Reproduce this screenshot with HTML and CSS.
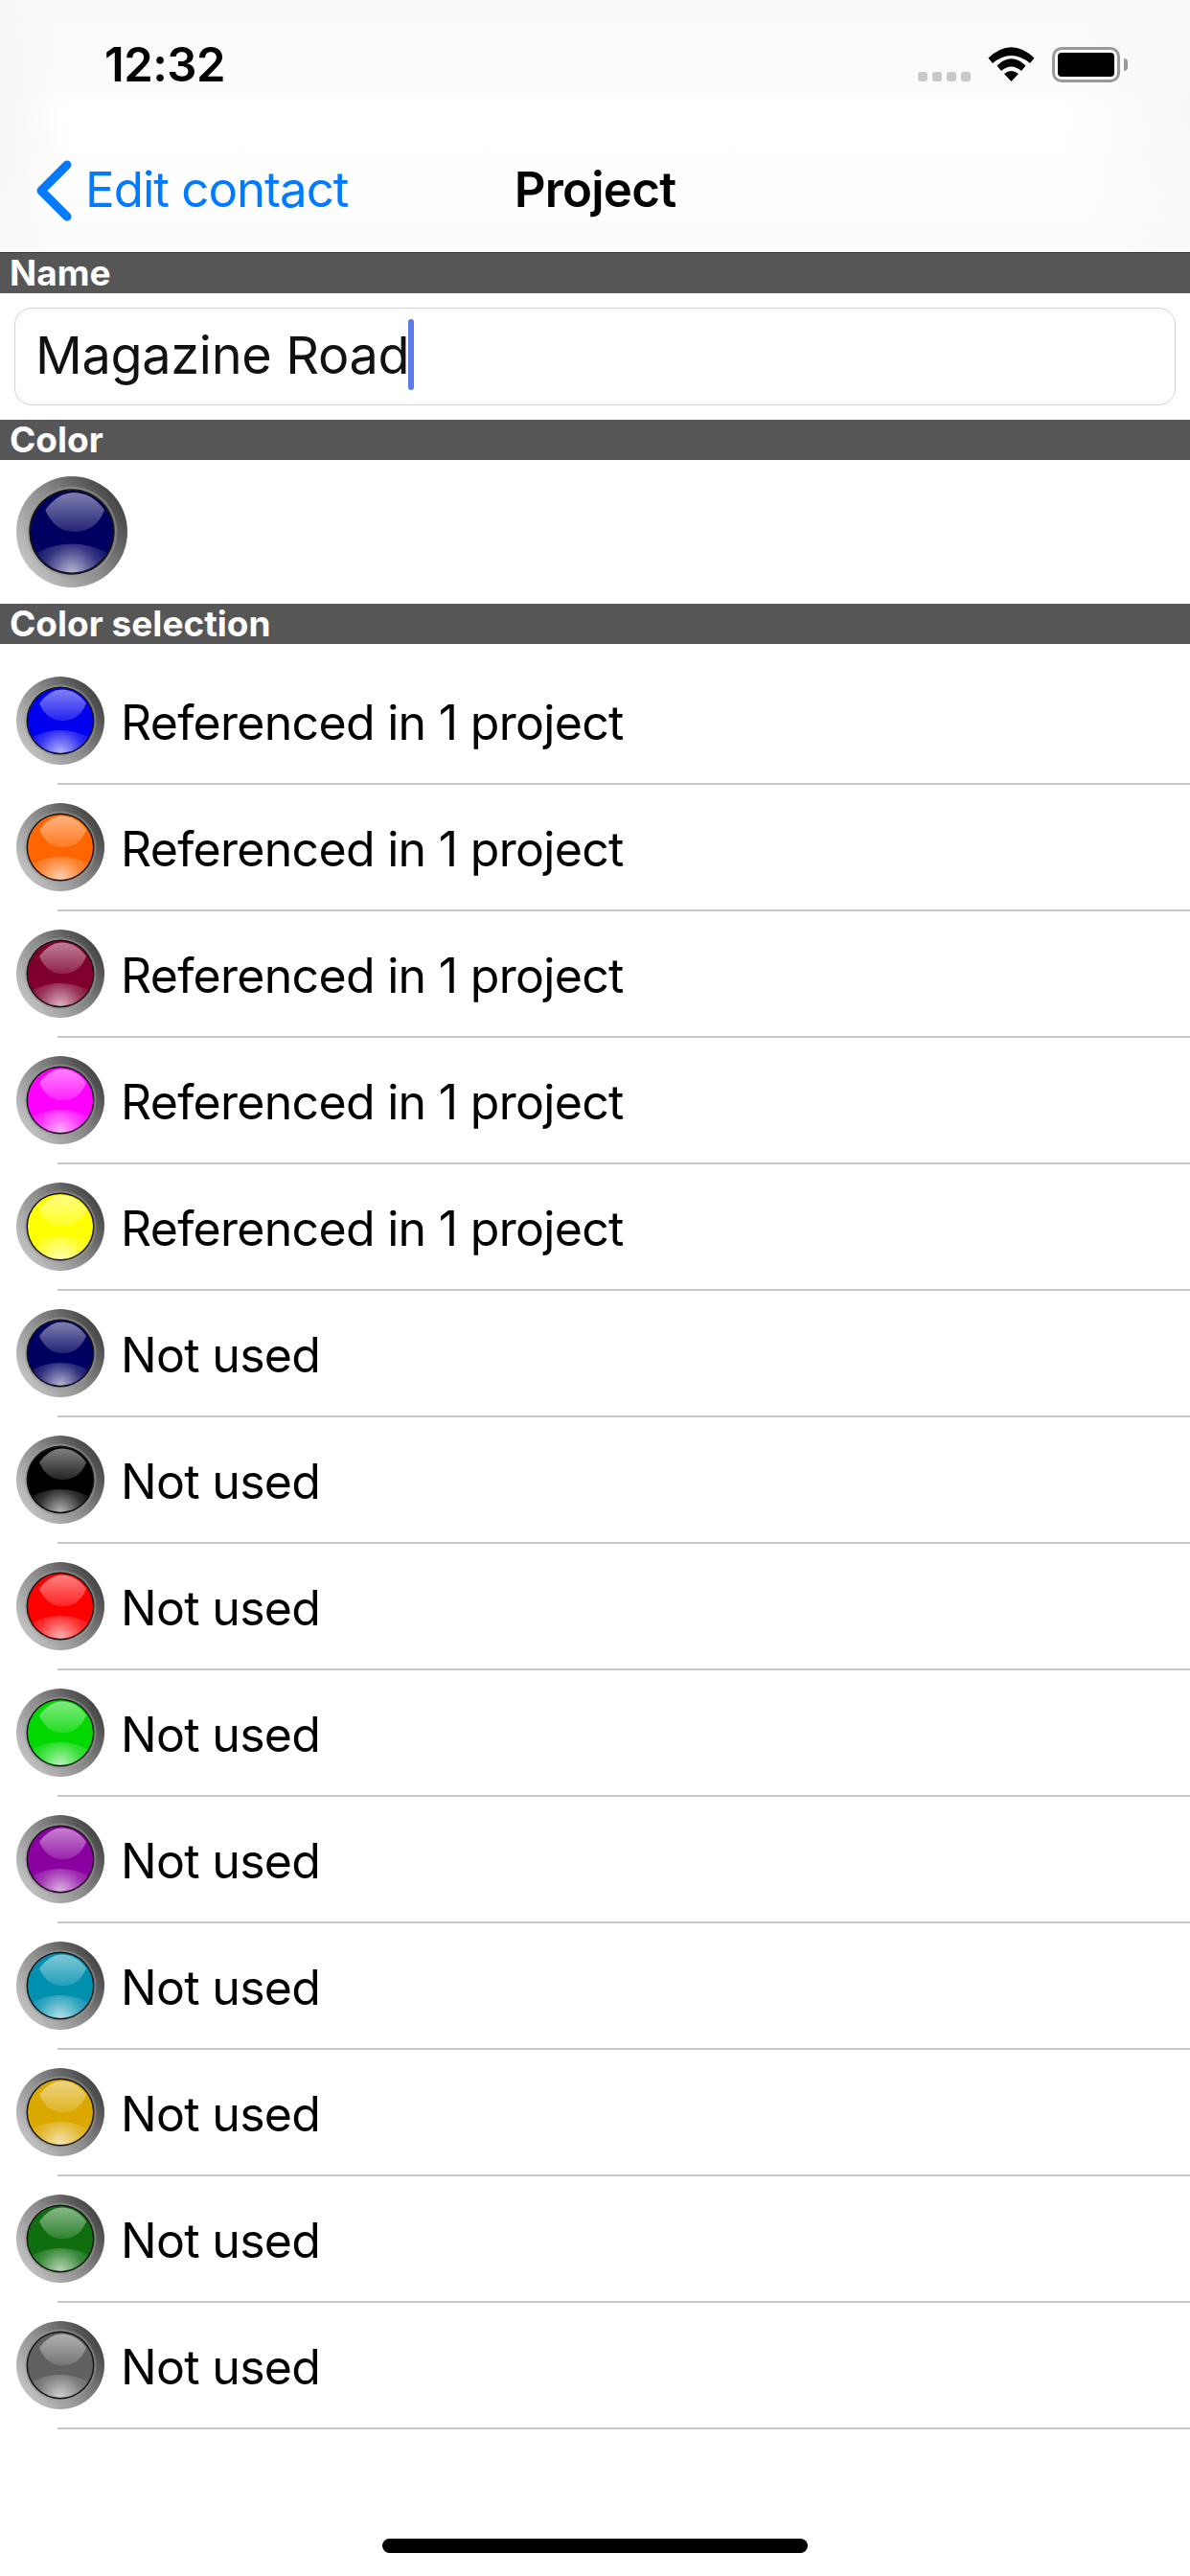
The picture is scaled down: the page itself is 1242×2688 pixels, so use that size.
FILE: index.html
```html
<!DOCTYPE html>
<html lang="en">
<head>
<meta charset="utf-8">
<title>Project</title>
<link rel="stylesheet" href="styles.css">
</head>
<body>
<svg class="defs" aria-hidden="true">
  <defs>
    <linearGradient id="bezel" x1="0.1" y1="0.85" x2="0.95" y2="0.25">
      <stop offset="0" stop-color="#c4c4c4"/>
      <stop offset="0.5" stop-color="#8c8c8c"/>
      <stop offset="1" stop-color="#454545"/>
    </linearGradient>
    <linearGradient id="gloss-top" x1="0" y1="0" x2="0" y2="1">
      <stop offset="0" stop-color="#fff" stop-opacity="0.5"/>
      <stop offset="1" stop-color="#fff" stop-opacity="0.14"/>
    </linearGradient>
    <radialGradient id="gloss-bottom" gradientUnits="userSpaceOnUse" cx="46" cy="80" r="36">
      <stop offset="0" stop-color="#fff" stop-opacity="0.72"/>
      <stop offset="0.65" stop-color="#fff" stop-opacity="0.2"/>
      <stop offset="1" stop-color="#fff" stop-opacity="0.05"/>
    </radialGradient>
    <symbol id="led" viewBox="0 0 92 92">
      <circle cx="46" cy="46" r="46" fill="url(#bezel)"/>
      <circle cx="46" cy="46" r="37.500" fill="#999" fill-opacity="0.55"/>
      <circle cx="46" cy="46" r="35.500" fill="#151515"/>
      <circle cx="46" cy="46" r="34" fill="currentColor"/>
      <path d="M24 28 Q34 14 47 13.500 Q63 13.500 73 28 Q66 46 48 46 Q32 46 24 28Z" fill="url(#gloss-top)"/>
      <path d="M17 63 Q46 49 75 63 A33.500 33.500 0 0 1 17 63Z" fill="url(#gloss-bottom)"/>
    </symbol>
  </defs>
</svg>
<main class="app">
  <header class="top">
    <div class="status">
      <span class="time">12:32</span>
      <div class="indicators">
        <div class="signal"><i></i><i></i><i></i><i></i></div>
        <svg class="wifi" viewBox="0 0 49 36"><path d="M24.500 36 L17 28 Q24.500 22 32 28Z M9.500 19.500 Q24.500 5 39.500 19.500 L35 25 Q24.500 16 14 25Z M0.500 11.500 Q24.500 -11 48.500 11.500 L44 17 Q24.500 1 5 17Z" fill="#000"/></svg>
        <div class="battery"><div class="battery-fill"></div></div>
        <div class="battery-cap"></div>
      </div>
    </div>
    <nav class="nav">
      <a class="back">
        <svg class="chevron" viewBox="0 0 37 64"><path d="M32 5 L5 32 L32 59" fill="none" stroke="#007aff" stroke-width="9" stroke-linecap="round" stroke-linejoin="round"/></svg>
        <span>Edit contact</span>
      </a>
      <h1 class="title">Project</h1>
    </nav>
  </header>

  <h2 class="section">Name</h2>
  <div class="field-wrap">
    <div class="field"><span>Magazine Road</span><i class="caret"></i></div>
  </div>

  <h2 class="section">Color</h2>
  <div class="current"><svg class="led led-large c-navy"><use href="#led"/></svg></div>

  <h2 class="section">Color selection</h2>
  <ul class="list">
    <li class="row"><svg class="led c-blue"><use href="#led"/></svg><span>Referenced in 1 project</span></li>
    <li class="row"><svg class="led c-orange"><use href="#led"/></svg><span>Referenced in 1 project</span></li>
    <li class="row"><svg class="led c-maroon"><use href="#led"/></svg><span>Referenced in 1 project</span></li>
    <li class="row"><svg class="led c-magenta"><use href="#led"/></svg><span>Referenced in 1 project</span></li>
    <li class="row"><svg class="led c-yellow"><use href="#led"/></svg><span>Referenced in 1 project</span></li>
    <li class="row"><svg class="led c-navy"><use href="#led"/></svg><span>Not used</span></li>
    <li class="row"><svg class="led c-black"><use href="#led"/></svg><span>Not used</span></li>
    <li class="row"><svg class="led c-red"><use href="#led"/></svg><span>Not used</span></li>
    <li class="row"><svg class="led c-green"><use href="#led"/></svg><span>Not used</span></li>
    <li class="row"><svg class="led c-purple"><use href="#led"/></svg><span>Not used</span></li>
    <li class="row"><svg class="led c-teal"><use href="#led"/></svg><span>Not used</span></li>
    <li class="row"><svg class="led c-gold"><use href="#led"/></svg><span>Not used</span></li>
    <li class="row"><svg class="led c-dkgreen"><use href="#led"/></svg><span>Not used</span></li>
    <li class="row"><svg class="led c-gray"><use href="#led"/></svg><span>Not used</span></li>
  </ul>
  <div class="home"><div class="home-bar"></div></div>
</main>
</body>
</html>
```
FILE: styles.css
```css
* { box-sizing: border-box; }
html, body { margin: 0; padding: 0; background: #fff; }
body { font-family: Inter, "Noto Sans", "Liberation Sans", sans-serif; color: #000; }
.defs { position: absolute; width: 0; height: 0; }
.app { width: 1242px; height: 2688px; display: flex; flex-direction: column; overflow: hidden; }

.top {
  height: 264px;
  border-bottom: 1px solid #3a3a3a;
  background:
    radial-gradient(ellipse 70px 220px at 0 130px, #f6f6f6, rgba(246,246,246,0)),
    radial-gradient(ellipse 130px 240px at 1242px 120px, #f8f8f8, rgba(248,248,248,0)),
    linear-gradient(#fafafa 0, #fcfcfc 90px, #fff 110px, #fefefe 200px, #fbfbfb 264px);
  display: flex;
  flex-direction: column;
}
.status { height: 132px; display: flex; justify-content: space-between; align-items: flex-start; padding: 44px 65px 0 109px; }
.time { font-size: 49px; font-weight: 600; line-height: 48px; letter-spacing: -0.5px; }
.indicators { display: flex; align-items: flex-start; padding-top: 5px; }
.signal { display: flex; gap: 5px; margin-top: 26px; margin-right: 18px; }
.signal i { width: 10px; height: 10px; border-radius: 3px; background: #c9c9c9; }
.wifi { width: 49px; height: 36px; margin-right: 18px; }
.battery { width: 71px; height: 37px; border: 3px solid #9a9a9a; border-radius: 10px; padding: 3px; }
.battery-fill { width: 100%; height: 100%; background: #000; border-radius: 4px; }
.battery-cap { width: 4px; height: 13px; margin: 12px 0 0 4px; background: #9a9a9a; border-radius: 0 7px 7px 0; }

.nav { height: 131px; position: relative; display: flex; align-items: flex-start; }
.back { display: flex; align-items: flex-start; color: #007aff; font-size: 51px; line-height: 62px; letter-spacing: -1px; padding: 35px 0 0 38px; }
.chevron { width: 37px; height: 64px; margin-right: 14px; }
.back span { display: block; }
.title { position: absolute; left: 0; right: 0; top: 35px; margin: 0; text-align: center; font-size: 51px; line-height: 62px; font-weight: 600; letter-spacing: -0.8px; }

.section { margin: 0; height: 42px; background: #565656; color: #fff; font-size: 37px; line-height: 42px; font-weight: 700; padding-left: 10px; }
.field-wrap { height: 132px; padding: 15px; }
.field { height: 102px; border: 1.500px solid #d2d2d2; border-radius: 18px; background: #fff; display: flex; align-items: center; padding: 0 0 4px 21px; font-size: 54px; color: #111; letter-spacing: -0.3px; }
.caret { display: block; width: 6px; height: 74px; background: #5b7bef; border-radius: 3px; margin-left: -1px; }

.current { height: 150px; padding: 17px 0 0 17px; }
.led { display: block; width: 92px; height: 92px; flex: none; }
.led-large { width: 116px; height: 116px; }

.list { list-style: none; margin: 0; padding: 14px 0 0; }
.row { height: 132px; display: flex; align-items: center; padding: 0 0 0 17px; gap: 17px; font-size: 50px; letter-spacing: -0.7px; position: relative; }
.row span { margin-top: 4px; }
.row::after { content: ""; position: absolute; left: 60px; right: 0; bottom: -1px; height: 2px; background: #c8c8ca; }

.home { margin-top: auto; height: 39px; display: flex; justify-content: center; }
.home-bar { width: 444px; height: 15px; border-radius: 8px; background: #000; }

.c-blue { color: #0000ee; }
.c-orange { color: #ff6600; }
.c-maroon { color: #800030; }
.c-magenta { color: #ff00ff; }
.c-yellow { color: #ffff00; }
.c-navy { color: #000060; }
.c-black { color: #000; }
.c-red { color: #ff0000; }
.c-green { color: #00d800; }
.c-purple { color: #8a00a0; }
.c-teal { color: #0090b0; }
.c-gold { color: #dba800; }
.c-dkgreen { color: #0f6f0f; }
.c-gray { color: #636060; }
```
